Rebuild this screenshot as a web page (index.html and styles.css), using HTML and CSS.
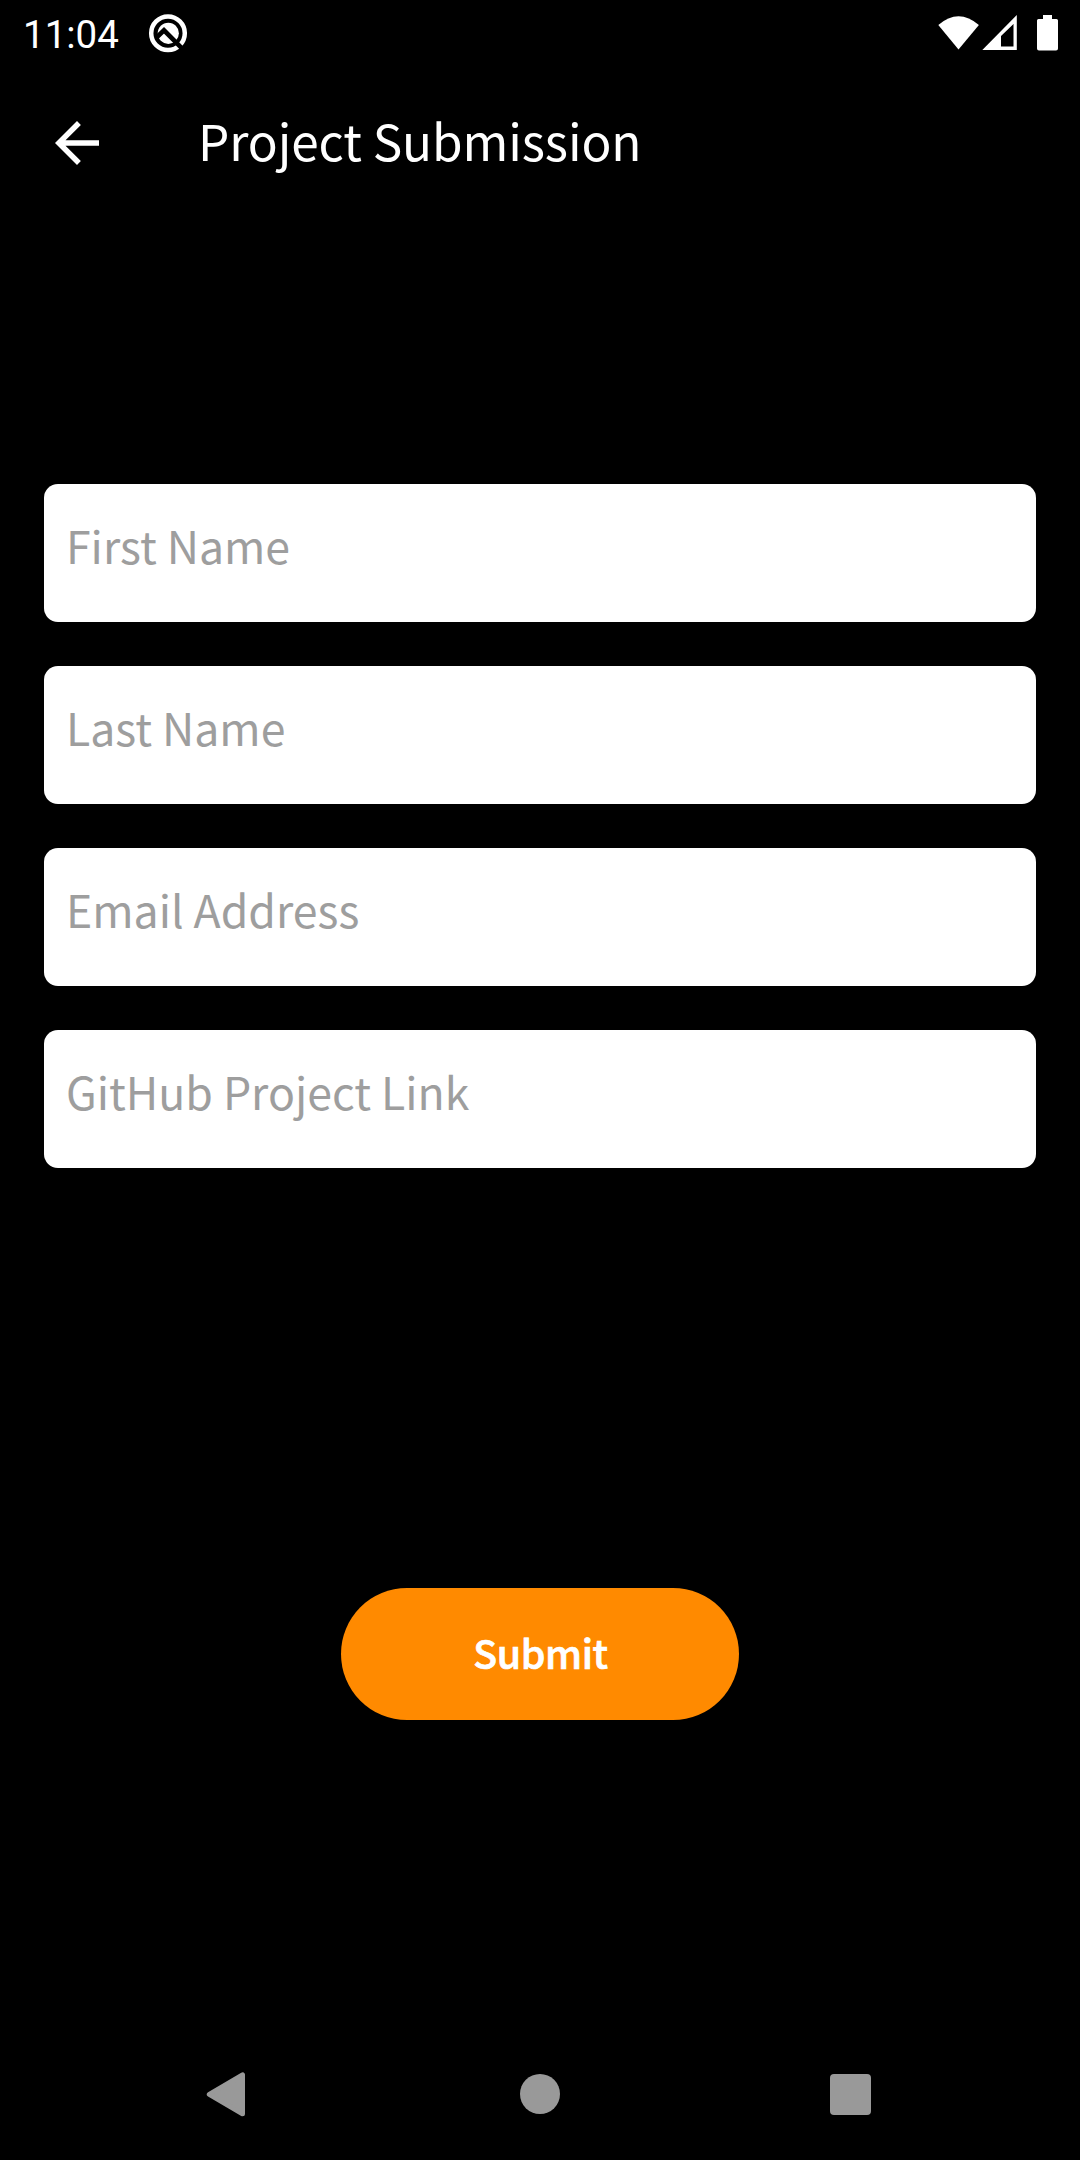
FILE: index.html
```html
<!DOCTYPE html>
<html lang="en">
<head>
<meta charset="utf-8">
<title>Project Submission</title>
<link rel="stylesheet" href="styles.css">
</head>
<body>
<div class="screen">
  <div class="status">
    <span class="clock">11:04</span>
    <svg class="q-icon" viewBox="0 0 40 40" width="40" height="40">
      <circle cx="20" cy="20.300" r="16.8" fill="none" stroke="#fff" stroke-width="4.500"/>
      <circle cx="20.300" cy="20.300" r="10.600" fill="#fff"/>
      <path d="M8.500 24.500L16 17.300L36.500 37.800" fill="none" stroke="#000" stroke-width="4.600"/>
    </svg>
    <div class="signals">
      <svg viewBox="0 0 122 40" width="122" height="40">
        <path d="M0.3 12Q20.5 -5.5 40.9 12L20.5 36.5Z" fill="#fff"/>
        <path fill-rule="evenodd" d="M44.3 37L78.8 2V37ZM63 23V33.5H75.5V11Z" fill="#fff"/>
        <path d="M105 2h9v4h4.500q1.500 0 1.500 1.500V35.500q0 2-2 2H101q-2 0-2-2V7.500q0-1.500 1.500-1.500H105Z" fill="#fff"/>
      </svg>
    </div>
  </div>
  <header class="appbar">
    <svg class="back" viewBox="0 0 44 44" width="44" height="44">
      <path d="M44 19.250H10.530L25.900 3.880L22 0L0 22L22 44L25.880 40.120L10.530 24.750H44Z" fill="#fff"/>
    </svg>
    <h1 class="title">Project Submission</h1>
  </header>
  <form class="form">
    <input class="field" type="text" placeholder="First Name">
    <input class="field" type="text" placeholder="Last Name">
    <input class="field" type="text" placeholder="Email Address">
    <input class="field" type="text" placeholder="GitHub Project Link">
    <button class="submit" type="button">Submit</button>
  </form>
  <nav class="navbar">
    <svg viewBox="0 0 44 48" width="44" height="48"><path d="M4.300 24.300L37.500 4.800V43.800Z" fill="#999" stroke="#999" stroke-width="5" stroke-linejoin="round"/></svg>
    <svg viewBox="0 0 40 40" width="40" height="40"><circle cx="20" cy="20" r="20" fill="#999"/></svg>
    <svg viewBox="0 0 41 41" width="41" height="41"><rect width="41" height="41" rx="4" fill="#999"/></svg>
  </nav>
</div>
</body>
</html>
```
FILE: styles.css
```css
* { box-sizing: border-box; }
body {
  margin: 0;
  background: #000;
  color: #fff;
  font-family: "Noto Sans CJK SC", "Noto Sans", sans-serif;
}
.screen {
  width: 1080px;
  height: 2160px;
  display: flex;
  flex-direction: column;
  overflow: hidden;
}
svg { display: block; flex: none; }
.status {
  height: 66px;
  display: flex;
  align-items: center;
  padding: 0 20px 0 23px;
}
.clock {
  width: 125px;
  font-family: Roboto, sans-serif;
  font-size: 38.5px;
  line-height: 66px;
  padding-top: 3px;
}
.signals { margin-left: auto; }
.appbar {
  height: 154px;
  display: flex;
  align-items: center;
  padding: 0 44px 0 55px;
}
.title {
  margin: 0 0 6px 99px;
  font-size: 49.5px;
  font-weight: 400;
  line-height: 70px;
  letter-spacing: -0.1px;
}
.form {
  flex: 1;
  display: flex;
  flex-direction: column;
  gap: 44px;
  padding: 264px 44px 0;
}
.field {
  flex: none;
  width: 100%;
  height: 138px;
  margin: 0;
  padding: 0 22px 18px;
  border: 0;
  border-radius: 14px;
  background: #fff;
  font: 400 44.6px "Noto Sans CJK SC", "Noto Sans", sans-serif;
}
.field::placeholder { color: #9e9e9e; opacity: 1; }
.submit {
  width: 398px;
  height: 132px;
  margin: 376px auto 0;
  padding: 0 0 6px 1px;
  border: 0;
  border-radius: 66px;
  background: #ff8a00;
  color: #fff;
  font: 500 39.3px "Noto Sans CJK SC", "Noto Sans", sans-serif;
  letter-spacing: -0.4px;
  -webkit-text-stroke: 0.7px #fff;
}
.navbar {
  height: 132px;
  display: flex;
  align-items: center;
  justify-content: space-between;
  padding: 0 209px 0 205px;
}
```
